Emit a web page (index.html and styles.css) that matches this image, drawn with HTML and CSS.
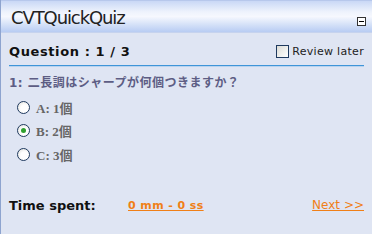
FILE: index.html
```html
<!DOCTYPE html>
<html>
<head>
<meta charset="utf-8">
<link rel="stylesheet" href="styles.css">
</head>
<body>
<div class="quiz">
  <div class="header">
    <span class="title">CVTQuickQuiz</span>
    <span class="minimize"></span>
  </div>
  <div class="content">
    <div class="qbar">
      <span class="qnum">Question : 1 / 3</span>
      <label class="review"><span class="check"></span>Review later</label>
    </div>
    <div class="qtext">1: 二長調はシャープが何個つきますか？</div>
    <div class="options">
      <div class="opt"><span class="radio"></span><span class="otext">A: 1個</span></div>
      <div class="opt"><span class="radio on"></span><span class="otext">B: 2個</span></div>
      <div class="opt"><span class="radio"></span><span class="otext">C: 3個</span></div>
    </div>
    <div class="footer">
      <span class="tlabel">Time spent:</span>
      <span class="tval">0 mm - 0 ss</span>
      <span class="next">Next &gt;&gt;</span>
    </div>
  </div>
</div>
</body>
</html>
```
FILE: styles.css
```css
html, body { margin: 0; padding: 0; }
body { width: 372px; height: 234px; overflow: hidden; background: #dfe5f3; }
.quiz {
  width: 372px; height: 234px; box-sizing: border-box;
  border-left: 1px solid #8ea4cf;
  background: #dfe5f3;
  display: flex; flex-direction: column;
}
.header {
  height: 33px; box-sizing: border-box;
  background: linear-gradient(#c9d8f6 0%, #eef3fc 35%, #f6f8fe 50%, #d6e2f8 75%, #b8ccf3 100%);
  border-top: 1px solid #b7c8ec;
  border-bottom: 1px solid #c6d3ee;
  display: flex; align-items: center; justify-content: space-between;
  padding: 0 6px 0 10px;
}
.title {
  font-family: "DejaVu Sans", sans-serif; font-size: 18px; color: #222;
  letter-spacing: -1.1px; margin-top: 2px;
}
.minimize {
  width: 7px; height: 7px; border: 1px solid #333; background: #fff;
  position: relative; margin-top: 10px;
}
.minimize::after {
  content: ""; position: absolute; left: 1px; right: 1px; top: 3px; height: 1px; background: #000;
}
.content { padding: 0 8px 0 8px; display: flex; flex-direction: column; flex: 1; }
.qbar {
  display: flex; justify-content: space-between; align-items: center;
  height: 33px; box-sizing: border-box; padding-top: 4px;
  border-bottom: 1px solid #3f95d8;
  box-shadow: 0 1px 0 #b9d3ef;
}
.qnum { font-family: "DejaVu Sans", sans-serif; font-weight: bold; font-size: 13px; color: #111; letter-spacing: 0.6px; }
.review { display: flex; align-items: center; font-family: "DejaVu Sans", sans-serif; font-size: 11px; color: #222; letter-spacing: 0.3px; }
.check {
  width: 11px; height: 11px; border: 1px solid #1f3a5f; margin-right: 3px;
  background: linear-gradient(135deg, #dcdcd6, #fff);
}
.qtext {
  margin-top: 7px; font-family: "DejaVu Sans", "Noto Sans CJK JP", sans-serif;
  font-weight: bold; font-size: 12px; color: #5d5d84; letter-spacing: 0.5px;
}
.options { display: flex; flex-direction: column; gap: 7px; margin-top: 9px; padding-left: 8px; }
.opt { display: flex; align-items: center; height: 16.5px; }
.radio {
  width: 11px; height: 11px; border-radius: 50%; border: 1px solid #1f3a5f;
  background: radial-gradient(circle at 60% 60%, #fff 40%, #dcdcd6);
  margin-right: 6px; position: relative;
}
.radio.on::after {
  content: ""; position: absolute; left: 3px; top: 3px; width: 5px; height: 5px; border-radius: 50%;
  background: #2fa02f;
}
.otext {
  font-family: "Liberation Serif", "Noto Sans CJK JP", serif; font-weight: bold; font-size: 13px; color: #666;
}
.footer {
  display: flex; align-items: center; margin-top: 35px;
  font-family: "DejaVu Sans", sans-serif; font-weight: bold; font-size: 13px;
}
.tlabel { color: #111; width: 119px; }
.tval { color: #f07f17; text-decoration: underline; flex: 1; font-size: 11px; letter-spacing: 0.4px; }
.next { color: #f07f17; text-decoration: underline; font-weight: normal; font-size: 12px; }
```
